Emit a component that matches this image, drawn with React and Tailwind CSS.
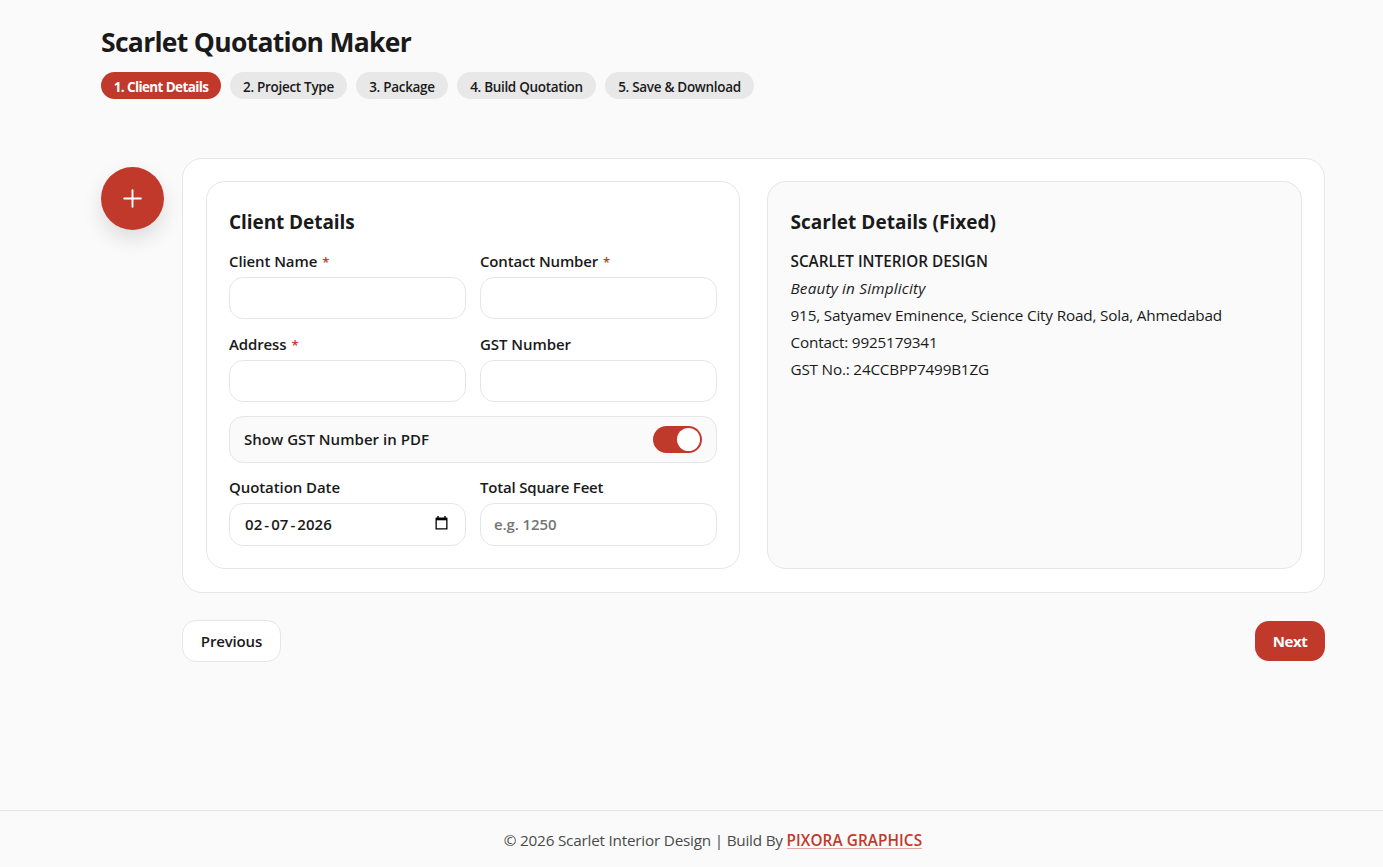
import { useState } from 'react';
import clsx from 'clsx';

const steps = [
  { name: '1. Client Details', width: 'w-[120px]', tracking: 'tracking-[-0.62px]' },
  { name: '2. Project Type', width: 'w-[117px]', tracking: 'tracking-[-0.3px]' },
  { name: '3. Package', width: 'w-[92px]', tracking: 'tracking-[-0.3px]' },
  { name: '4. Build Quotation', width: 'w-[139px]', tracking: 'tracking-[-0.32px]' },
  { name: '5. Save & Download', width: 'w-[149px]', tracking: 'tracking-[-0.3px]' },
];

function Field({ label, required, tracking, className, children }) {
  return (
    <label className={clsx('block', className)}>
      <span className={clsx('block h-[22px] text-[15px] leading-[22px] font-semibold whitespace-nowrap', tracking)}>
        {label}
        {required && <span className="ml-[5px] inline-block text-[13px] leading-none text-[#c0392b]">*</span>}
      </span>
      {children}
    </label>
  );
}

function TextInput({ className, ...props }) {
  return (
    <input
      className={clsx(
        'block w-full rounded-[14px] border border-[#e6e6e6] bg-white px-[13px] text-[15px] font-semibold outline-none placeholder:text-[#757575]',
        className
      )}
      {...props}
    />
  );
}

export default function App() {
  const [step, setStep] = useState(0);
  const [showGst, setShowGst] = useState(true);

  return (
    <div className="flex min-h-screen flex-col bg-[#fafafa] font-['Open_Sans',sans-serif] text-[#1a1a1a]">
      <div className="flex-1 pr-[58px] pl-[101px]">
        {/* Header */}
        <header className="pt-[25px]">
          <h1 className="h-[34px] text-[26.5px] leading-[34px] font-bold tracking-[-0.7px]">Scarlet Quotation Maker</h1>
          <nav className="mt-[13px] flex gap-[9px]">
            {steps.map((s, i) => (
              <button
                key={s.name}
                onClick={() => setStep(i)}
                className={clsx(
                  'flex h-[27px] items-center justify-center rounded-full pt-[4px] text-[13.5px] whitespace-nowrap',
                  s.width,
                  s.tracking,
                  i === step ? 'bg-[#c0392b] font-bold text-white' : 'bg-[#e8e8e8] font-semibold'
                )}
              >
                {s.name}
              </button>
            ))}
          </nav>
        </header>

        <div className="mt-[59px] flex items-start gap-[18px]">
          {/* New quotation */}
          <button className="mt-[9px] flex size-[63px] shrink-0 items-center justify-center rounded-full bg-[#c0392b] text-white shadow-[0_9px_20px_rgba(0,0,0,0.12)]">
            <svg width="19" height="19" viewBox="0 0 19 19" fill="none" stroke="currentColor" strokeWidth="1.9" strokeLinecap="round">
              <path d="M9.5 1.2v16.6M1.2 9.5h16.6" />
            </svg>
          </button>

          <main className="min-w-0 flex-1">
            <div className="grid h-[435px] grid-cols-[534px_535px] gap-[27px] rounded-[20px] border border-[#e6e6e6] bg-white pt-[22px] pb-[23px] pl-[23px]">
              {/* Client details */}
              <section className="rounded-[19px] border border-[#e6e6e6] px-[22px] pt-[26px]">
                <h2 className="h-7 text-[19px] leading-7 font-bold tracking-[-0.07px]">Client Details</h2>
                <div className="mt-[14px] grid grid-cols-[237px_237px] gap-x-[14px] gap-y-[14px]">
                  <Field label="Client Name" required tracking="tracking-[-0.1px]">
                    <TextInput className="mt-[5px] h-[42px]" />
                  </Field>
                  <Field label="Contact Number" required tracking="tracking-[-0.15px]">
                    <TextInput className="mt-[5px] h-[42px]" />
                  </Field>
                  <Field label="Address" required tracking="tracking-[-0.12px]">
                    <TextInput className="mt-[5px] h-[42px]" />
                  </Field>
                  <Field label="GST Number" tracking="tracking-[-0.05px]">
                    <TextInput className="mt-[5px] h-[42px]" />
                  </Field>
                  <div className="col-span-2 flex h-[47px] items-center justify-between rounded-[14px] border border-[#e6e6e6] bg-[#fafafa] px-[14px]">
                    <span className="text-[15px] font-semibold tracking-[0.03px]">Show GST Number in PDF</span>
                    <button
                      onClick={() => setShowGst(!showGst)}
                      className={clsx(
                        'flex h-[27px] w-[49px] items-center rounded-full px-[2px]',
                        showGst ? 'justify-end bg-[#c0392b]' : 'justify-start bg-[#d4d4d4]'
                      )}
                    >
                      <span className="size-[23px] rounded-full bg-white" />
                    </button>
                  </div>
                  <Field label="Quotation Date" tracking="tracking-[-0.08px]" className="-mt-px">
                    <span className="mt-[5px] flex h-[43px] items-center justify-between rounded-[14px] border border-[#e6e6e6] bg-white pr-[17px] pl-[15px] text-[15px] font-semibold">
                      <span className="flex tracking-[0.05px]">
                        <span>02</span>
                        <span className="px-[2px]">-</span>
                        <span>07</span>
                        <span className="px-[2px]">-</span>
                        <span>2026</span>
                      </span>
                      <svg className="mb-[3px]" width="13" height="14" viewBox="0 0 13 14" fill="none" stroke="#000" strokeWidth="1.3">
                        <path d="M1.15 2.3h10.7v10.5H1.15z" />
                        <path d="M1 3h11" strokeWidth="2.6" />
                        <path d="M3 0v2M10 0v2" strokeWidth="1.4" />
                      </svg>
                    </span>
                  </Field>
                  <Field label="Total Square Feet" tracking="tracking-[-0.18px]" className="-mt-px">
                    <TextInput className="mt-[5px] h-[43px] pb-[2px] tracking-[-0.1px]" placeholder="e.g. 1250" />
                  </Field>
                </div>
              </section>

              {/* Company details */}
              <section className="rounded-[19px] border border-[#e6e6e6] bg-[#fafafa] px-[22.5px] pt-[26px]">
                <h2 className="h-7 text-[19px] leading-7 font-bold tracking-[0.03px]">Scarlet Details (Fixed)</h2>
                <div className="mt-[12px] text-[15.3px] leading-[27px] whitespace-nowrap">
                  <p className="font-semibold">SCARLET INTERIOR DESIGN</p>
                  <p className="tracking-[0.18px] italic">Beauty in Simplicity</p>
                  <p className="tracking-[-0.18px]">915, Satyamev Eminence, Science City Road, Sola, Ahmedabad</p>
                  <p className="tracking-[-0.18px]">Contact: 9925179341</p>
                  <p className="tracking-[-0.2px]">GST No.: 24CCBPP7499B1ZG</p>
                </div>
              </section>
            </div>

            {/* Actions */}
            <div className="mt-[27px] flex items-center justify-between text-[15px] font-semibold">
              <button
                onClick={() => setStep(Math.max(0, step - 1))}
                className="h-[42px] w-[99px] rounded-[14px] border border-[#e6e6e6] bg-white tracking-[-0.15px]"
              >
                Previous
              </button>
              <button
                onClick={() => setStep(Math.min(steps.length - 1, step + 1))}
                className="h-10 w-[70px] rounded-[14px] bg-[#c0392b] font-bold tracking-[-0.4px] text-white"
              >
                Next
              </button>
            </div>
          </main>
        </div>
      </div>

      <footer className="flex h-[57px] justify-center border-t border-[#e6e6e6] pt-[18px] pl-[43px] text-[15.3px] leading-[23px] whitespace-nowrap text-[#4a4a4a]">
        <p className="tracking-[-0.22px]">
          © 2026 Scarlet Interior Design | Build By{' '}
          <a href="#" className="inline-block h-5 border-b border-[#e3a8a2] font-semibold tracking-[0.1px] text-[#c0392b]">PIXORA GRAPHICS</a>
        </p>
      </footer>
    </div>
  );
}
